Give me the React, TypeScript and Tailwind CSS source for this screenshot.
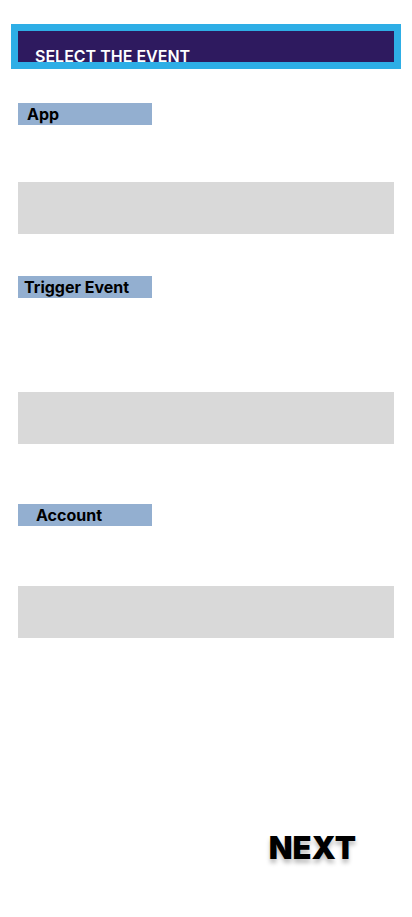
import React from 'react';

const Label: React.FC<{ text: string; pad: string }> = ({ text, pad }) => (
  <div className={`ml-[18px] flex h-[22px] w-[134px] items-center bg-[#93afd0] ${pad}`}>
    <span className="text-[16px] font-bold leading-none text-black">{text}</span>
  </div>
);

const Field: React.FC = () => <div className="mx-[18px] h-[52px] bg-[#d9d9d9]" />;

export default function App() {
  return (
    <div className="min-h-[917px] w-[412px] bg-white pt-[24px]" style={{ fontFamily: 'Inter, "Liberation Sans", sans-serif' }}>
      {/* header */}
      <div className="mx-[11px] w-[390px] border-[7px] border-[#2eaee6] bg-[#2e1a5f]">
        <div className="h-[31px] pl-[17px] pt-[13px]">
          <span className="text-[16px] font-semibold leading-none text-white">SELECT THE EVENT</span>
        </div>
      </div>

      <div className="mt-[34px]">
        <Label text="App" pad="pl-[9px]" />
      </div>
      <div className="mt-[57px]">
        <Field />
      </div>

      <div className="mt-[42px]">
        <Label text="Trigger Event" pad="pl-[6px]" />
      </div>
      <div className="mt-[94px]">
        <Field />
      </div>

      <div className="mt-[60px]">
        <Label text="Account" pad="pl-[18px]" />
      </div>
      <div className="mt-[60px]">
        <Field />
      </div>

      <div className="mt-[194px] flex justify-end pr-[56px]">
        <button className="text-[31px] font-black leading-none text-black [text-shadow:0_4px_4px_rgba(0,0,0,0.25)]">
          NEXT
        </button>
      </div>
    </div>
  );
}
